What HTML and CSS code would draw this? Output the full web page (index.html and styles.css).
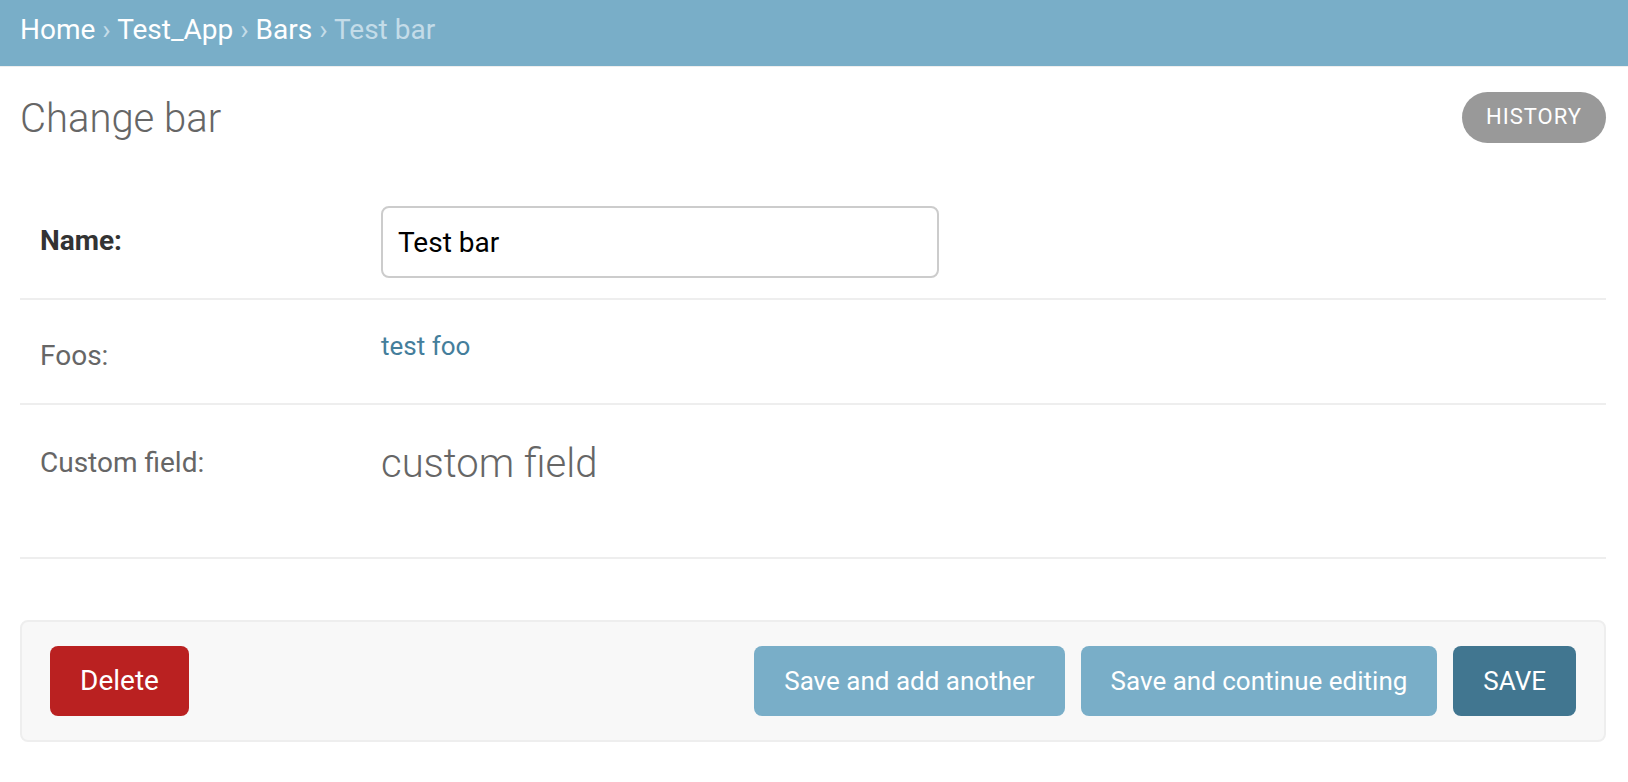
FILE: index.html
```html
<!DOCTYPE html>
<html lang="en">
<head>
<meta charset="utf-8">
<title>Change bar</title>
<link rel="stylesheet" href="styles.css">
</head>
<body>
<div class="breadcrumbs">
  <a href="#">Home</a> › <a href="#">Test_App</a> › <a href="#">Bars</a> › Test bar
</div>
<div class="content">
  <div class="title-row">
    <h1 class="title">Change bar</h1>
    <a class="history" href="#">History</a>
  </div>
  <form class="form">
    <div class="form-row row-name">
      <label class="label required">Name:</label>
      <input class="text-input" type="text" value="Test bar">
    </div>
    <div class="form-row row-foos">
      <label class="label label-foos">Foos:</label>
      <div class="readonly readonly-link"><a href="#">test foo</a></div>
    </div>
    <div class="form-row row-custom">
      <label class="label label-custom">Custom field:</label>
      <div class="readonly readonly-big">custom field</div>
    </div>
    <div class="submit-row">
      <a class="btn btn-delete" href="#">Delete</a>
      <div class="submit-right">
        <span class="btn btn-light">Save and add another</span>
        <span class="btn btn-light">Save and continue editing</span>
        <span class="btn btn-default">Save</span>
      </div>
    </div>
  </form>
</div>
</body>
</html>
```
FILE: styles.css
```css
html, body {
  margin: 0;
  padding: 0;
  background: #fff;
}
body {
  font-family: Roboto, "Liberation Sans", sans-serif;
  color: #333;
}
a {
  text-decoration: none;
}
.breadcrumbs {
  box-sizing: border-box;
  height: 67px;
  padding: 16px 20px 0;
  background: #79aec8;
  border-bottom: 1px solid #eeeeee;
  color: #c4dce8;
  font-size: 28px;
  line-height: 28px;
  white-space: nowrap;
}
.breadcrumbs a {
  color: #fff;
}
.content {
  padding: 0 22px 0 20px;
}
.title-row {
  display: flex;
  align-items: center;
  justify-content: space-between;
  height: 51px;
  margin-top: 25px;
}
.title {
  margin: 0;
  font-size: 40px;
  line-height: 40px;
  font-weight: 300;
  color: #666;
  padding-top: 2px;
}
.history {
  box-sizing: border-box;
  width: 144px;
  height: 51px;
  border-radius: 26px;
  background: #999;
  color: #fff;
  font-size: 22px;
  letter-spacing: 1px;
  text-transform: uppercase;
  display: flex;
  align-items: center;
  justify-content: center;
  padding-bottom: 2px;
}
.form {
  margin: 43px 0 0;
}
.form-row {
  display: flex;
  align-items: flex-start;
  padding: 20px;
  border-bottom: 2px solid #eeeeee;
}
.label {
  flex: 0 0 341px;
  font-size: 28px;
  line-height: 28px;
  color: #666;
}
.label.required {
  font-weight: 700;
  color: #333;
  margin-top: 21px;
}
.text-input {
  box-sizing: border-box;
  width: 558px;
  height: 72px;
  margin: 0;
  padding: 0 15px;
  border: 2px solid #cccccc;
  border-radius: 8px;
  font-family: Roboto, "Liberation Sans", sans-serif;
  font-size: 28px;
  color: #000;
  background: #fff;
  outline: none;
}
.row-foos {
  min-height: 63px;
}
.label-foos {
  margin-top: 22px;
}
.readonly-link {
  margin-top: 13px;
  font-size: 26px;
  line-height: 26px;
}
.readonly-link a {
  color: #447e9b;
}
.row-custom {
  min-height: 112px;
}
.label-custom {
  margin-top: 24px;
}
.readonly-big {
  margin-top: 19px;
  font-size: 40px;
  line-height: 40px;
  font-weight: 300;
  color: #666;
}
.submit-row {
  box-sizing: border-box;
  display: flex;
  justify-content: space-between;
  align-items: center;
  margin-top: 61px;
  height: 122px;
  padding: 24px 28px;
  background: #f8f8f8;
  border: 2px solid #eeeeee;
  border-radius: 8px;
}
.submit-right {
  display: flex;
  gap: 16px;
}
.btn {
  display: block;
  height: 70px;
  line-height: 70px;
  padding: 0 30px;
  border-radius: 8px;
  color: #fff;
  font-size: 26px;
  white-space: nowrap;
}
.btn-delete {
  background: #ba2121;
  font-size: 28px;
}
.btn-light {
  background: #79aec8;
}
.btn-default {
  background: #417690;
  text-transform: uppercase;
}
```
